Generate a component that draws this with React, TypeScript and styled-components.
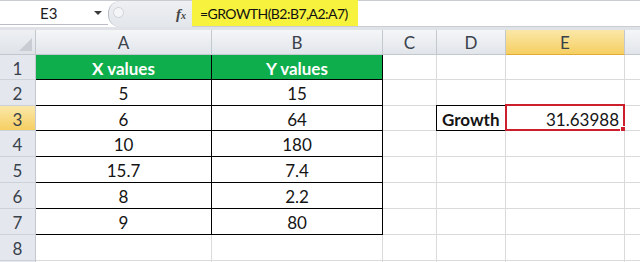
import React from 'react';
import styled, {createGlobalStyle, css} from 'styled-components';

const GlobalStyle = createGlobalStyle`
    html, body {
        margin: 0;
        padding: 0;
        background: #ffffff;
    }
    body {
        font-family: Lato, "Open Sans", "Liberation Sans", sans-serif;
    }
`;

const Sheet = styled.div`
    width: 640px;
    height: 262px;
    overflow: hidden;
    background: #ffffff;
    display: flex;
    flex-direction: column;
`;

const FormulaBar = styled.div`
    display: flex;
    height: 26px;
    border-top: 1px solid #c9ccd1;
    background: #ffffff;
    flex-shrink: 0;
`;

const NameBox = styled.div`
    width: 108px;
    margin-top: 1px;
    height: 23px;
    box-sizing: border-box;
    border-bottom: 1px solid #b9bec6;
    display: flex;
    align-items: center;
    font-size: 15px;
    color: #1d1d1d;
`;

const NameText = styled.span`
    margin-left: 40px;
    flex: 1;
`;

const DropArrow = styled.span`
    width: 0;
    height: 0;
    margin-right: 6px;
    border-left: 4px solid transparent;
    border-right: 4px solid transparent;
    border-top: 4px solid #3a3a3a;
`;

const Splitter = styled.div`
    width: 84px;
    background: linear-gradient(#eef0f3, #e3e6ea);
    border-radius: 12px 0 0 12px;
    border-left: 1px solid #b7bcc4;
    display: flex;
    align-items: center;
    justify-content: space-between;
    padding: 0 6px 0 4px;
    box-sizing: border-box;
`;

const Knob = styled.span`
    width: 9px;
    height: 9px;
    border-radius: 50%;
    border: 1px solid #cfd3d8;
    background: #f4f5f7;
    margin-top: -4px;
`;

const Fx = styled.span`
    font-family: "Liberation Serif", serif;
    font-style: italic;
    font-weight: bold;
    font-size: 15px;
    color: #444;
    & sub {
        font-size: 10px;
        vertical-align: 0;
    }
`;

const FormulaInput = styled.div`
    flex: 1;
    display: flex;
    border-bottom: 1px solid #c9ccd1;
`;

const Highlight = styled.div`
    width: 166px;
    margin-top: -1px;
    background: #f6f23d;
    display: flex;
    align-items: center;
    padding-left: 8px;
    box-sizing: border-box;
    font-size: 14px;
    color: #111;
    letter-spacing: -0.55px;
`;

const Strip = styled.div`
    height: 3px;
    background: #dfe3e8;
    flex-shrink: 0;
`;

const Grid = styled.div`
    display: grid;
    grid-template-columns: 36px 176px 171px 54px 69px 119px 90px;
    grid-template-rows: 25px 25px 26px 25px 26px 26px 26px 26px 26px 26px;
`;

const headerFace = css<{$active?: boolean}>`
    background: ${p => p.$active
        ? 'linear-gradient(#fae7a8, #f6cf62)'
        : 'linear-gradient(#f5f6f8, #e1e5ea)'};
    color: #39414b;
    font-size: 17px;
    display: flex;
    align-items: center;
    justify-content: center;
    box-sizing: border-box;
`;

const Corner = styled.div`
    position: relative;
    background: linear-gradient(#eef0f3, #dfe3e8);
    border-right: 1px solid #c3c8cf;
    border-bottom: 1px solid #c3c8cf;
    box-sizing: border-box;
    overflow: hidden;
    &::after {
        content: '';
        position: absolute;
        right: 3px;
        bottom: 3px;
        border-left: 13px solid transparent;
        border-bottom: 13px solid #c9cdd3;
    }
`;

const ColHead = styled.div<{$active?: boolean}>`
    ${headerFace};
    border-right: 1px solid #c3c8cf;
    border-bottom: 1px solid ${p => p.$active ? '#e2ad36' : '#c3c8cf'};
`;

const RowHead = styled.div<{$active?: boolean}>`
    ${headerFace};
    background: ${p => p.$active ? 'linear-gradient(#fae7a8, #f6cf62)' : '#e4e8ee'};
    border-right: 1px solid #c3c8cf;
    border-bottom: 1px solid #cdd2d8;
    padding-top: 2px;
`;

type CellProps = {
    $fill?: string,
    $bold?: boolean,
    $align?: 'left' | 'center' | 'right',
    $edge?: 'grid' | 'table',
    $boxed?: boolean,
    $color?: string,
};

const Cell = styled.div<CellProps>`
    position: relative;
    box-sizing: border-box;
    display: flex;
    align-items: center;
    padding: 2px 5px 0 5px;
    justify-content: ${p => p.$align === 'left' ? 'flex-start' : p.$align === 'right' ? 'flex-end' : 'center'};
    background: ${p => p.$fill ?? '#ffffff'};
    color: ${p => p.$color ?? '#141414'};
    font-size: 17px;
    font-weight: ${p => p.$bold ? 700 : 400};
    border-right: 1px solid ${p => p.$edge === 'table' ? '#000' : '#dadada'};
    border-bottom: 1px solid ${p => p.$edge === 'table' ? '#000' : '#dadada'};
    ${p => p.$boxed && css`
        border: 1px solid #000;
        margin-top: -1px;
        margin-left: -1px;
    `}
`;

const ActiveFrame = styled.div`
    position: absolute;
    inset: -2px -1px -1px -1px;
    border: 2px solid #cc1f2b;
    pointer-events: none;
    &::after {
        content: '';
        position: absolute;
        right: -4px;
        bottom: -4px;
        width: 5px;
        height: 5px;
        background: #cc1f2b;
        border: 1px solid #fff;
    }
`;

// column F is only a sliver at the right edge, its letter falls outside the view
const columns = ['A', 'B', 'C', 'D', 'E', ''];

const data: [string, string][] = [
    ['5', '15'],
    ['6', '64'],
    ['10', '180'],
    ['15.7', '7.4'],
    ['8', '2.2'],
    ['9', '80'],
];

function App() {
    const rows = [];

    // row 1, green header of the table
    rows.push(
        <React.Fragment key="r1">
            <RowHead>1</RowHead>
            <Cell $fill="#0fae4c" $color="#ffffff" $bold $edge="table">X values</Cell>
            <Cell $fill="#0fae4c" $color="#ffffff" $bold $edge="table">Y values</Cell>
            <Cell />
            <Cell />
            <Cell />
            <Cell />
        </React.Fragment>
    );

    data.forEach(([x, y], i) => {
        const n = i + 2;
        rows.push(
            <React.Fragment key={'r' + n}>
                <RowHead $active={n === 3}>{n}</RowHead>
                <Cell $edge="table">{x}</Cell>
                <Cell $edge="table">{y}</Cell>
                <Cell />
                {n === 3 ? (
                    <>
                        <Cell $boxed $bold $align="left">Growth</Cell>
                        <Cell $align="right">31.63988<ActiveFrame /></Cell>
                    </>
                ) : (
                    <>
                        <Cell />
                        <Cell />
                    </>
                )}
                <Cell />
            </React.Fragment>
        );
    });

    rows.push(
        <React.Fragment key="r8">
            <RowHead>8</RowHead>
            <Cell /><Cell /><Cell /><Cell /><Cell /><Cell />
        </React.Fragment>
    );

    // row 9 only shows as a sliver at the bottom edge
    rows.push(
        <React.Fragment key="r9">
            <RowHead />
            <Cell /><Cell /><Cell /><Cell /><Cell /><Cell />
        </React.Fragment>
    );

    return (
        <>
            <GlobalStyle />
            <Sheet>
                <FormulaBar>
                    <NameBox>
                        <NameText>E3</NameText>
                        <DropArrow />
                    </NameBox>
                    <Splitter>
                        <Knob />
                        <Fx>f<sub>x</sub></Fx>
                    </Splitter>
                    <FormulaInput>
                        <Highlight>=GROWTH(B2:B7,A2:A7)</Highlight>
                    </FormulaInput>
                </FormulaBar>
                <Strip />
                <Grid>
                    <Corner />
                    {columns.map((c, i) => (
                        <ColHead key={i} $active={c === 'E'}>{c}</ColHead>
                    ))}
                    {rows}
                </Grid>
            </Sheet>
        </>
    );
}

export default App;
